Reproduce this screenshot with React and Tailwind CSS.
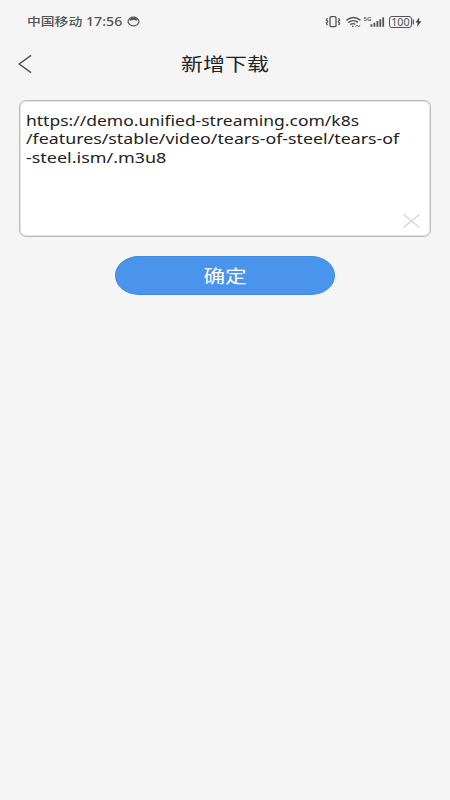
import React from "react";

const urlLines = [
  { text: "https://demo.unified-streaming.com/k8s", stretch: "scale-x-[1.205]" },
  {
    text: "/features/stable/video/tears-of-steel/tears-of",
    stretch: "scale-x-[1.227]",
  },
  { text: "-steel.ism/.m3u8", stretch: "scale-x-[1.237]" },
];

const StatusIcons = () => (
  <svg
    className="h-[14px] w-[98px]"
    viewBox="0 0 98 14"
    fill="none"
    stroke="#555"
    strokeWidth="1.3"
  >
    {/* vibrate */}
    <rect x="6" y="1.7" width="6" height="10" rx="1" />
    <path d="M3.4 3.2l-1 1.7 1.3 1.7-1.3 1.7 1 1.9M14.6 3.2l1 1.7-1.3 1.7 1.3 1.7-1 1.9" />
    {/* wifi */}
    <path
      d="M22.3 5.3Q29.5-.2 36.5 5.3M24.3 7.6Q29.3 3.8 34 7.4M26.3 9.6Q29 7.7 31.4 9.4"
      strokeWidth="1.4"
    />
    <circle cx="28.8" cy="11.3" r=".9" fill="#555" stroke="none" />
    <path d="M31.5 11.6l1.5-1.3 1.5 1.2 1.7-1" strokeWidth="1" />
    {/* signal */}
    <g fill="#555" stroke="none">
      <rect x="46.5" y="9.2" width="1.8" height="2.6" />
      <rect x="49.5" y="7.8" width="1.8" height="4" />
      <rect x="52.5" y="6" width="1.8" height="5.8" />
      <rect x="55.4" y="4.2" width="1.8" height="7.6" />
      <rect x="58.3" y="2.3" width="1.8" height="9.5" />
      <text
        x="39.5"
        y="6"
        fontSize="6"
        fontWeight="600"
        textLength="8"
        lengthAdjust="spacingAndGlyphs"
        fontFamily="Noto Sans"
      >
        5G
      </text>
      <text
        x="67.2"
        y="10.6"
        fontSize="10"
        textLength="18.5"
        lengthAdjust="spacingAndGlyphs"
        fontFamily="Noto Sans"
      >
        100
      </text>
    </g>
    {/* battery */}
    <rect x="65.5" y="1.5" width="22" height="11" rx="2.5" strokeWidth="1" />
    <path d="M89.3 4.5v5" strokeWidth="1.3" />
    <path
      d="M95.3 2.2L91.5 7.6h2.3L93 11.7 97.5 6.2h-2.6z"
      fill="#444"
      stroke="none"
    />
  </svg>
);

const StatusBar = () => (
  <div className="flex h-[42px] items-center justify-between pt-px pr-[28px] pl-[27px] text-[#555]">
    <div className="flex items-center">
      <span className="w-[55px] text-[11.5px] font-medium whitespace-nowrap">
        <span className="inline-block origin-left scale-x-[1.2]">中国移动</span>
      </span>
      <span className="ml-[4px] w-[37px] text-[12px] font-medium whitespace-nowrap">
        <span className="inline-block origin-left scale-x-[1.18]">17:56</span>
      </span>
      <svg
        className="ml-[4px] h-[11px] w-[13px]"
        viewBox="0 0 13 11"
        fill="none"
        stroke="#555"
      >
        <ellipse cx="6.5" cy="5.5" rx="5.4" ry="4.4" strokeWidth="1.2" />
        <path
          d="M2 3.6Q6.5-.5 11 3.6L9.6 4.800Q6.500 3.400 3.400 4.800z"
          fill="#555"
          stroke="none"
        />
      </svg>
    </div>
    <StatusIcons />
  </div>
);

const Header = () => (
  <header className="grid h-[44px] grid-cols-3 items-center">
    <svg
      className="ml-[18px] h-[20px] w-[14px]"
      viewBox="0 0 14 20"
      fill="none"
      stroke="#555"
      strokeWidth="1.5"
    >
      <path d="M13 1.3L1.3 10 13 18.7" />
    </svg>
    <h1 className="text-center text-[18px] leading-none whitespace-nowrap text-[#222]">
      <span className="inline-block scale-x-[1.22]">新增下载</span>
    </h1>
  </header>
);

const UrlField = () => (
  <div className="mx-[19px] mt-[14px] flex h-[137px] justify-between rounded-[7px] border border-[#b9bcbc] bg-white pt-[10px] pr-[10px] pb-[8px] pl-[6px] ring-1 ring-[#e2e4e4] ring-inset">
    <div className="w-[373px] text-[14.5px] leading-[18.3px] text-[#222]">
      {urlLines.map((line) => (
        <div key={line.text} className="whitespace-nowrap">
          <span className={`inline-block origin-left ${line.stretch}`}>
            {line.text}
          </span>
        </div>
      ))}
    </div>
    <svg
      className="h-[14px] w-[17px] shrink-0 self-end"
      viewBox="0 0 17 14"
      stroke="#d4d4d4"
      strokeWidth="1.3"
    >
      <path d="M.5.5l16 13M16.5.5l-16 13" />
    </svg>
  </div>
);

export default function App() {
  return (
    <div className="min-h-screen bg-[#f5f5f5] font-['Noto_Sans','Noto_Sans_CJK_SC',sans-serif]">
      <StatusBar />
      <Header />
      <UrlField />
      <button className="mx-auto mt-[19px] flex h-[39px] w-[220px] items-center justify-center rounded-[24px/19.5px] border border-[#3f8de6] bg-[#4a94eb] pt-[2px] text-[18px] text-white">
        <span className="inline-block scale-x-[1.2]">确定</span>
      </button>
    </div>
  );
}
